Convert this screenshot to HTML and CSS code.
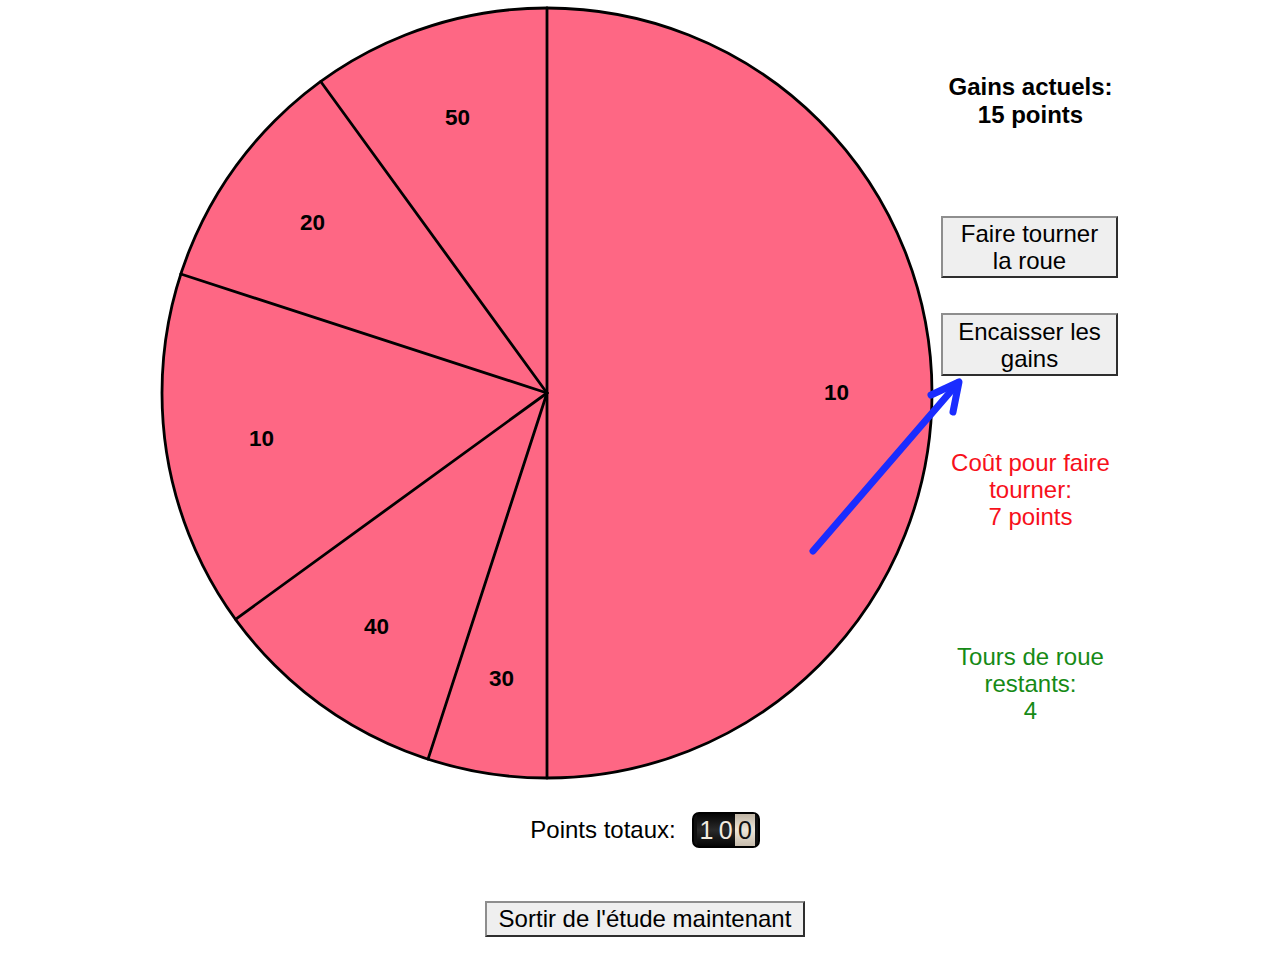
FILE: index.html
```html
<!DOCTYPE html>
<html lang="fr">
<head>
<meta charset="utf-8">
<title>Roue</title>
<link rel="stylesheet" href="styles.css">
</head>
<body>
<div class="page">
  <div class="stage">
    <svg class="wheel" width="776" height="776" viewBox="0 0 776 776">
      <circle cx="388" cy="388" r="385" fill="#fe6784" stroke="#000" stroke-width="2.8"/>
      <g stroke="#000" stroke-width="2.8" stroke-linecap="round">
        <line x1="388" y1="388" x2="388" y2="3"/>
        <line x1="388" y1="388" x2="388" y2="773"/>
        <line x1="388" y1="388" x2="269.03" y2="754.17"/>
        <line x1="388" y1="388" x2="76.53" y2="614.30"/>
        <line x1="388" y1="388" x2="21.83" y2="269.03"/>
        <line x1="388" y1="388" x2="161.70" y2="76.53"/>
      </g>
      <g class="labels">
        <text x="298.5" y="112">50</text>
        <text x="153.5" y="217">20</text>
        <text x="102.5" y="433">10</text>
        <text x="217.5" y="621">40</text>
        <text x="342.5" y="673">30</text>
        <text x="677.5" y="387">10</text>
      </g>
    </svg>
    <div class="side">
      <div class="gains">Gains actuels:<br>15 points</div>
      <button class="btn btn-spin">Faire tourner<br>la roue</button>
      <button class="btn btn-cash">Encaisser les<br>gains</button>
      <div class="cost">Coût pour faire<br>tourner:<br>7 points</div>
      <div class="turns">Tours de roue<br>restants:<br>4</div>
    </div>
  </div>
  <div class="bottom">
    <div class="totals">
      <span class="totals-label">Points totaux:</span>
      <span class="counter"><span class="digit">1</span><span class="digit">0</span><span class="digit last">0</span></span>
    </div>
    <button class="btn btn-exit">Sortir de l'étude maintenant</button>
  </div>
  <svg class="arrow" width="1270" height="964" viewBox="0 0 1270 964">
    <g stroke="#1a2cff" stroke-width="7" stroke-linecap="round" stroke-linejoin="round" fill="none">
      <line x1="813" y1="551" x2="958" y2="383"/>
      <polyline points="931,395 959,382 953,412"/>
    </g>
  </svg>
</div>
</body>
</html>
```

FILE: styles.css
```css
html, body {
  margin: 0;
  padding: 0;
  background: #fff;
}
body {
  font-family: "Liberation Sans", Arial, Helvetica, sans-serif;
  color: #000;
  font-size: 24px;
}
.page {
  position: relative;
  width: 1270px;
  height: 964px;
  overflow: hidden;
}
.stage {
  display: flex;
  align-items: flex-start;
  padding: 5px 0 0 158px;
}
.wheel {
  display: block;
  flex: none;
  margin-left: 0.5px;
}
.labels text {
  font-family: "Liberation Sans", Arial, sans-serif;
  font-weight: bold;
  font-size: 22.5px;
  text-anchor: middle;
  dominant-baseline: central;
  fill: #000;
}
.side {
  width: 192px;
  display: flex;
  flex-direction: column;
  align-items: center;
  text-align: center;
  line-height: 27.5px;
}
.gains {
  margin-top: 68px;
  font-weight: bold;
  line-height: 28px;
}
.btn {
  font-family: "Liberation Sans", Arial, sans-serif;
  font-size: 24px;
  line-height: 27px;
  color: #000;
  background: #efefef;
  border: 2px solid;
  border-color: #8e8e8e #2e2e2e #2e2e2e #8e8e8e;
  border-radius: 0;
  padding: 2px 0;
  margin: 0;
  cursor: pointer;
}
.btn-spin {
  width: 177px;
  margin-top: 87px;
  margin-left: -2px;
}
.btn-cash {
  width: 177px;
  margin-top: 35px;
  margin-left: -2px;
  height: 63px;
}
.cost {
  margin-top: 73px;
  color: #f7101b;
  line-height: 27px;
}
.turns {
  margin-top: 113px;
  color: #168a16;
  line-height: 27px;
}
.bottom {
  display: flex;
  flex-direction: column;
  align-items: center;
  padding-left: 20px;
}
.totals {
  margin-top: 31px;
  display: flex;
  align-items: center;
  gap: 16px;
  height: 36px;
}
.totals-label {
  line-height: 28px;
}
.counter {
  display: flex;
  align-items: stretch;
  height: 36px;
  padding: 0 3px;
  box-sizing: border-box;
  width: 68px;
  background: #111;
  border: 2px solid #000;
  border-radius: 7px;
}
.digit {
  flex: 1;
  display: flex;
  align-items: center;
  justify-content: center;
  color: #f3ece0;
  font-size: 25px;
  background: linear-gradient(#050505, #2a2a2a 50%, #050505);
}
.digit.last {
  color: #111;
  background: linear-gradient(#bfb4a4, #efe6d8 50%, #c7bcad);
}
.btn-exit {
  margin-top: 53px;
  padding: 1px 12px;
  line-height: 30px;
}
.arrow {
  position: absolute;
  top: 0;
  left: 0;
  pointer-events: none;
}
```
